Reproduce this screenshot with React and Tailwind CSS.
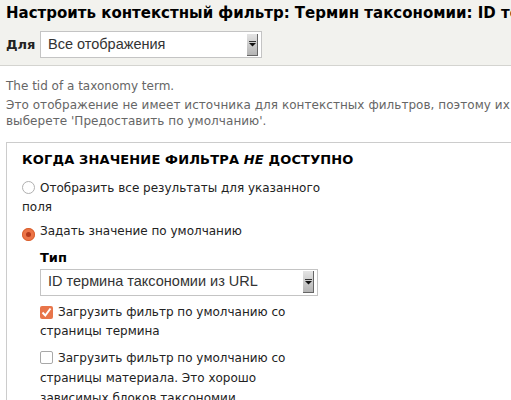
import React from "react";

const Arrow = () => (
  <span className="flex h-[22px] w-[11px] items-center justify-center border-r border-b border-[#666] bg-gradient-to-b from-[#e4e4e4] to-[#b4b4b4]">
    <svg width="7" height="6" viewBox="0 0 7 6">
      <rect x="0" y="0" width="7" height="1" fill="#333" />
      <path d="M0 2 H7 L3.5 5.5 Z" fill="#111" />
    </svg>
  </span>
);

const Select = ({ value, width }) => (
  <div
    className={`flex h-[27px] items-center justify-between border border-[#c4c4c4] bg-white pl-[7px] pr-[3px] font-['Liberation_Sans',sans-serif] text-[14.5px] text-[#333] ${width}`}
  >
    <span>{value}</span>
    <Arrow />
  </div>
);

const Radio = ({ checked }) =>
  checked ? (
    <span className="mr-[5px] inline-flex h-[13px] w-[13px] translate-y-[2px] items-center justify-center rounded-full bg-[#ec7447] shadow-[inset_0_0_0_1px_#d8612f]">
      <span className="h-[5px] w-[5px] rounded-full bg-[#b4391a]" />
    </span>
  ) : (
    <span className="mr-[5px] inline-block h-[13px] w-[13px] translate-y-[2px] rounded-full border border-[#b0b0b0] bg-white" />
  );

const Checkbox = ({ checked }) =>
  checked ? (
    <span className="mr-[5px] inline-flex h-[13px] w-[13px] translate-y-[2px] items-center justify-center rounded-[2px] bg-[#e8754a]">
      <svg width="11" height="11" viewBox="0 0 11 11">
        <path d="M1.5 5.5 L4.3 8.5 L9.5 1.5" stroke="#fff" strokeWidth="2" fill="none" />
      </svg>
    </span>
  ) : (
    <span className="mr-[5px] inline-block h-[13px] w-[13px] translate-y-[2px] rounded-[2px] border border-[#a8a8a8] bg-white" />
  );

export default function App() {
  return (
    <div className="h-[400px] w-[511px] overflow-hidden bg-white font-['DejaVu_Sans',sans-serif] text-[#222]">
      {/* header */}
      <div className="h-[66px] border-b border-[#d4d4d0] bg-[#f2f2ee] px-[6px] pt-[3px]">
        <h1 className="whitespace-nowrap text-[15px] font-bold leading-[20px] text-black">
          Настроить контекстный фильтр: Термин таксономии: ID термина таксономии
        </h1>
        <div className="mt-[8px] flex items-center">
          <span className="w-[34px] text-[13px] font-bold">Для</span>
          <Select value="Все отображения" width="w-[222px]" />
        </div>
      </div>

      {/* body */}
      <div className="px-[6px] pt-[12px] text-[12px] leading-[16px] text-[#666]">
        <p className="whitespace-nowrap">The tid of a taxonomy term.</p>
        <p className="mt-[3px] whitespace-nowrap tracking-[0.05px]">
          Это отображение не имеет источника для контекстных фильтров, поэтому их значения не будут доступны, если вы не
          <br />
          выберете 'Предоставить по умолчанию'.
        </p>

        <div className="mt-[13px] w-[600px] border border-[#ccc] px-[15px] pt-[7px] pb-[20px] text-[12px] leading-[19.5px] text-[#222]">
          <div className="text-[13px] font-bold tracking-[0.15px] text-black">
            КОГДА ЗНАЧЕНИЕ ФИЛЬТРА <em>НЕ</em> ДОСТУПНО
          </div>

          <div className="mt-[9px] w-[310px]">
            <div>
              <Radio />
              Отобразить все результаты для указанного поля
            </div>
            <div className="mt-[4px]">
              <Radio checked />
              Задать значение по умолчанию
            </div>

            <div className="ml-[18px] mt-[7px] w-[280px]">
              <div className="text-[13px] font-bold text-black">Тип</div>
              <div className="mt-[1px]">
                <Select value="ID термина таксономии из URL" width="w-[278px]" />
              </div>
              <div className="mt-[7px]">
                <Checkbox checked />
                Загрузить фильтр по умолчанию со страницы термина
              </div>
              <div className="mt-[6px] leading-[20px]">
                <Checkbox />
                Загрузить фильтр по умолчанию со страницы материала. Это хорошо зависимых блоков таксономии
              </div>
            </div>
          </div>
        </div>
      </div>
    </div>
  );
}
